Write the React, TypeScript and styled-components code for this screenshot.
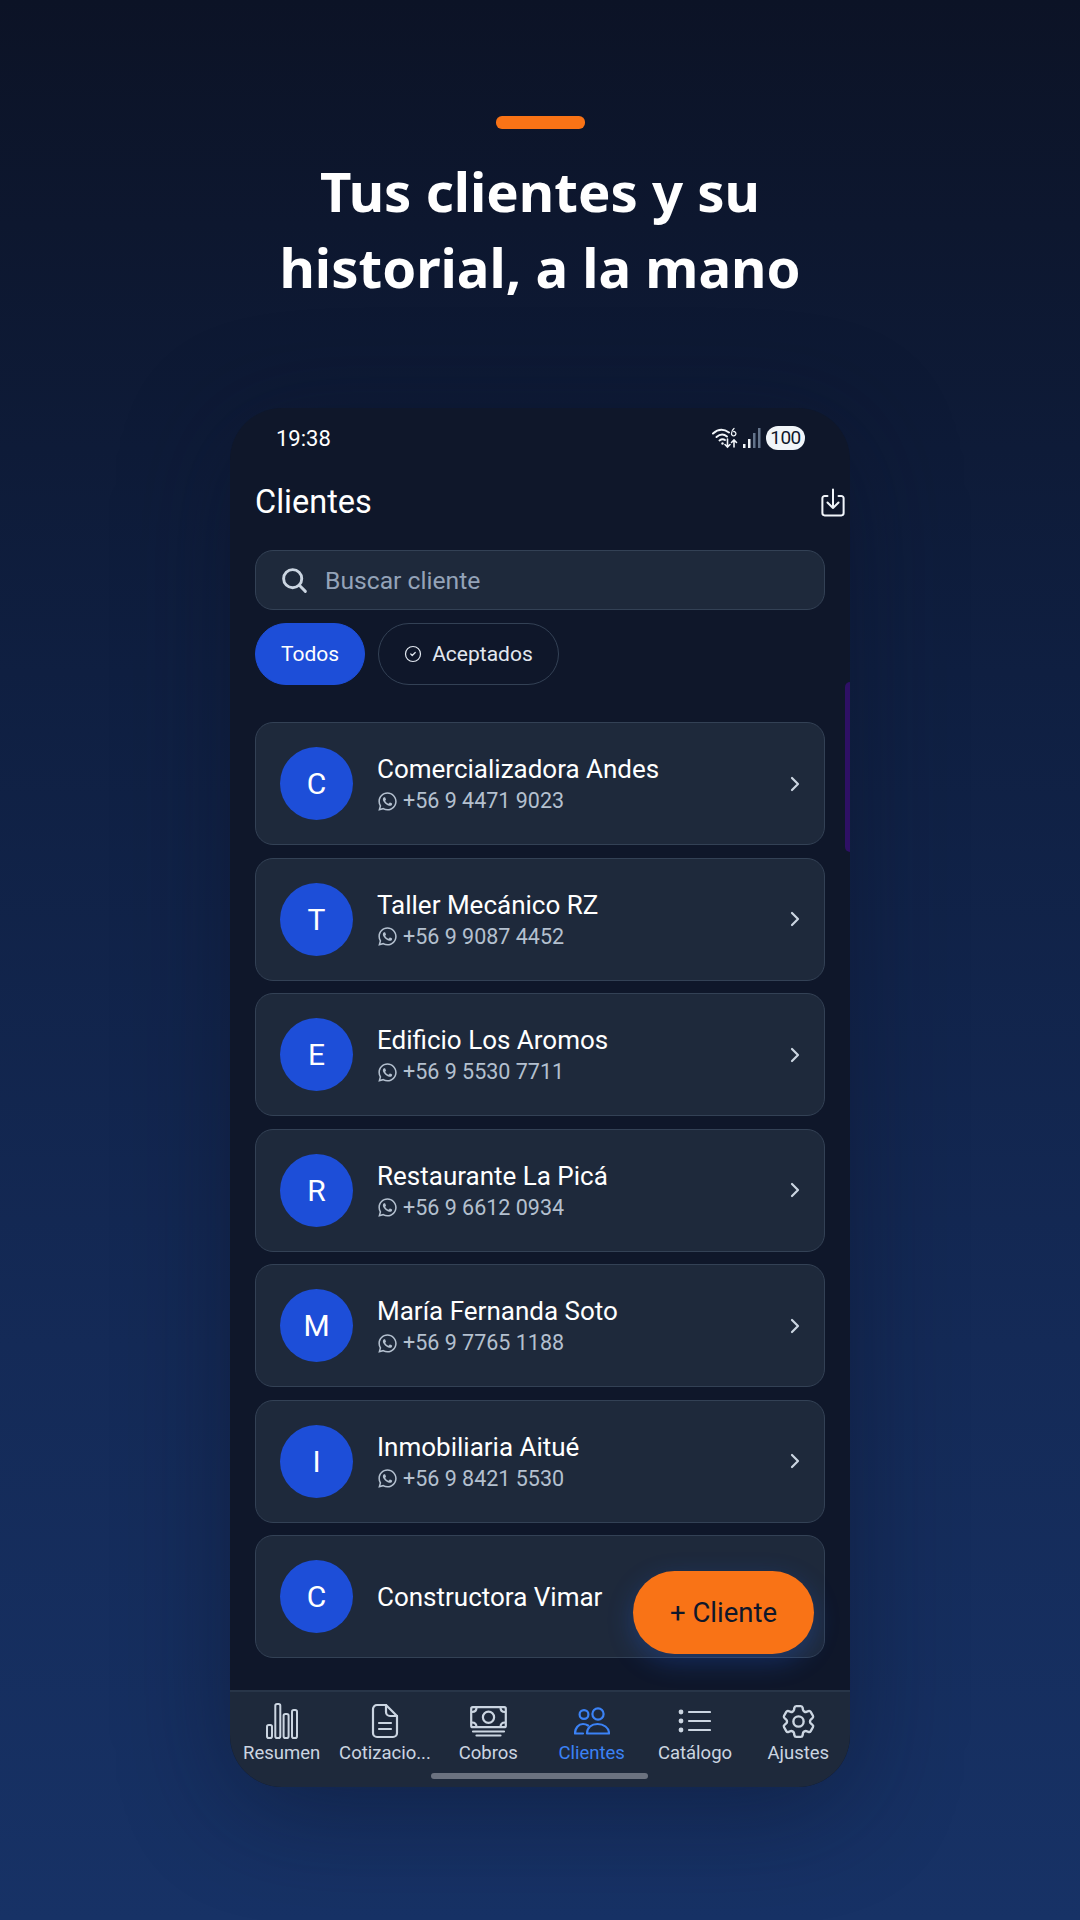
import React from "react";
import styled, { createGlobalStyle } from "styled-components";
import { FaWhatsapp } from "react-icons/fa";
import { HiOutlineCog6Tooth, HiOutlineMagnifyingGlass } from "react-icons/hi2";
import { LuChevronRight, LuCircleCheck } from "react-icons/lu";

const GlobalStyle = createGlobalStyle`
  html, body {
    margin: 0;
    padding: 0;
    background: #0b1224;
  }
  * {
    box-sizing: border-box;
  }
`;

const Page = styled.div`
  width: 1080px;
  height: 1920px;
  overflow: hidden;
  display: flex;
  flex-direction: column;
  align-items: center;
  padding-top: 116px;
  background: linear-gradient(180deg, #0c1326 0%, #0f1f41 35%, #142a57 70%, #173266 100%);
  font-family: "Noto Sans", "Open Sans", sans-serif;
  color: #fff;
`;

const Accent = styled.div`
  width: 89px;
  height: 13px;
  border-radius: 6px;
  background: #f97316;
`;

const Headline = styled.h1`
  margin: 24px 0 0;
  width: 700px;
  text-align: center;
  font-size: 54.5px;
  line-height: 76px;
  font-weight: 700;
`;

const Phone = styled.div`
  position: relative;
  margin-top: 103px;
  width: 620px;
  height: 1379px;
  display: flex;
  flex-direction: column;
  border-radius: 52px;
  overflow: hidden;
  background: #0f172a;
  box-shadow: 0 20px 110px rgba(11, 18, 38, 0.45);
  font-family: Roboto, "Noto Sans", sans-serif;
`;

const StatusBar = styled.div`
  height: 60px;
  padding: 0 45px 0 46px;
  display: flex;
  align-items: center;
  justify-content: space-between;
  font-size: 22px;
`;

const StatusIcons = styled.div`
  display: flex;
  align-items: center;
  gap: 5px;
`;

const Battery = styled.span`
  width: 39px;
  height: 24px;
  border-radius: 12px;
  background: #f1f5f9;
  color: #0f172a;
  font-size: 19px;
  line-height: 24px;
  text-align: center;
  letter-spacing: -0.5px;
`;

const TopBar = styled.div`
  margin-top: 9px;
  height: 50px;
  padding: 0 5px 0 25px;
  display: flex;
  align-items: center;
  justify-content: space-between;
`;

const Title = styled.div`
  font-size: 32.5px;
`;

const Search = styled.div`
  margin: 23px 25px 0;
  height: 60px;
  padding: 0 24px;
  display: flex;
  align-items: center;
  gap: 16px;
  border-radius: 18px;
  border: 1.5px solid #334155;
  background: #1e293b;
  color: #94a3b8;
  font-size: 24.7px;
  svg {
    color: #cbd5e1;
    flex: none;
  }
`;

const Chips = styled.div`
  margin: 13px 25px 0;
  display: flex;
  gap: 13px;
`;

const Chip = styled.div<{ $active?: boolean }>`
  height: 62px;
  padding: 0 25px;
  display: flex;
  align-items: center;
  gap: 10px;
  border-radius: 31px;
  font-size: 21px;
  color: ${(p) => (p.$active ? "#fff" : "#e2e8f0")};
  background: ${(p) => (p.$active ? "#1d4ed8" : "transparent")};
  border: 1.5px solid ${(p) => (p.$active ? "#1d4ed8" : "#334155")};
`;

const List = styled.div`
  flex: 1;
  min-height: 0;
  margin-top: 37px;
  padding: 0 25px;
  display: flex;
  flex-direction: column;
  gap: 12.5px;
  overflow: hidden;
`;

const Card = styled.div`
  height: 123px;
  flex: none;
  padding: 0 17px 0 24px;
  display: flex;
  align-items: center;
  border-radius: 18px;
  border: 1.5px solid #334155;
  background: #1e293b;
  color: #cbd5e1;
`;

const Avatar = styled.div`
  width: 73px;
  height: 73px;
  flex: none;
  border-radius: 50%;
  background: #1d4ed8;
  color: #fff;
  font-size: 30px;
  display: flex;
  align-items: center;
  justify-content: center;
`;

const Info = styled.div`
  flex: 1;
  margin-left: 24px;
  display: flex;
  flex-direction: column;
  gap: 1px;
`;

const Name = styled.div`
  color: #fff;
  font-size: 26px;
  line-height: 34px;
`;

const PhoneLine = styled.div`
  display: flex;
  align-items: center;
  gap: 5px;
  color: #b4c0cf;
  font-size: 21.5px;
  line-height: 28px;
`;

const Fab = styled.div`
  position: absolute;
  right: 36px;
  top: 1163px;
  width: 181px;
  height: 83px;
  border-radius: 42px;
  background: #f97316;
  color: #0f172a;
  font-size: 27.5px;
  display: flex;
  align-items: center;
  justify-content: center;
  box-shadow: 0 8px 26px rgba(37, 99, 235, 0.28);
`;

const EdgeHandle = styled.div`
  position: absolute;
  right: 0;
  top: 274px;
  width: 5px;
  height: 170px;
  border-radius: 5px 0 0 5px;
  background: #2e1065;
`;

const Nav = styled.div`
  position: relative;
  height: 97px;
  flex: none;
  display: grid;
  grid-template-columns: repeat(6, 1fr);
  padding-top: 10px;
  align-items: start;
  background: #1e293b;
  border-top: 2px solid #283548;
`;

const NavItem = styled.div<{ $active?: boolean }>`
  min-width: 0;
  display: flex;
  flex-direction: column;
  align-items: center;
  color: ${(p) => (p.$active ? "#3b82f6" : "#cbd5e1")};
`;

const NavIcon = styled.div`
  height: 38px;
  display: flex;
  align-items: center;
  justify-content: center;
`;

const NavLabel = styled.div`
  margin-top: 1px;
  font-size: 18.5px;
  line-height: 24px;
  white-space: nowrap;
`;

const HomeBar = styled.div`
  position: absolute;
  left: 201px;
  bottom: 8px;
  width: 217px;
  height: 6px;
  border-radius: 3px;
  background: #6b7280;
`;

const WifiIcon = () => (
  <svg width="26" height="22" viewBox="0 0 26 22" fill="none" stroke="#f1f5f9" strokeLinecap="round">
    <path d="M1 6.5C6 2 12 2 17 5.5" strokeWidth="2" />
    <path d="M4.5 10C8 7 12 7 15 9.5" strokeWidth="2" />
    <path d="M7.5 13.5C9.5 12 11.5 12 13 13" strokeWidth="2" />
    <circle cx="10.5" cy="16.5" r="1.2" fill="#f1f5f9" stroke="none" />
    <path d="M15.5 12v8m-2.5-2.5 2.5 2.5 2.5-2.5" strokeWidth="1.6" />
    <path d="M22 20v-7m-2.5 2.5L22 13l2.5 2.5" strokeWidth="1.6" />
    <path d="M22 1.5C20 3 19.5 5 19.5 6.5a2.2 2.2 0 1 0 2.2-2" strokeWidth="1.3" />
  </svg>
);

const SignalIcon = () => (
  <svg width="18" height="22" viewBox="0 0 18 22">
    <rect x="0" y="17" width="2.5" height="4" fill="#f1f5f9" />
    <rect x="5" y="12" width="2.5" height="9" fill="#f1f5f9" />
    <rect x="10" y="6" width="2.5" height="15" fill="#64748b" />
    <rect x="15" y="1" width="2.5" height="20" fill="#64748b" />
  </svg>
);

const DownloadIcon = () => (
  <svg width="24" height="31" viewBox="0 0 26 32" fill="none" stroke="#f1f5f9" strokeWidth="2.2" strokeLinecap="round" strokeLinejoin="round">
    <path d="M7 9H4a2.5 2.5 0 0 0-2.5 2.5v16A2.5 2.5 0 0 0 4 30h18a2.5 2.5 0 0 0 2.5-2.5v-16A2.5 2.5 0 0 0 22 9h-3" />
    <path d="M13 2v20m-6-6 6 6 6-6" />
  </svg>
);

const BarsIcon = () => (
  <svg width="32" height="36" viewBox="0 0 32 36" fill="none" stroke="currentColor" strokeWidth="2">
    <rect x="1" y="22" width="5" height="13" rx="1.8" />
    <rect x="9.3" y="1" width="5" height="34" rx="1.8" />
    <rect x="17.6" y="11" width="5" height="24" rx="1.8" />
    <rect x="26" y="7" width="5" height="28" rx="1.8" />
  </svg>
);

const DocIcon = () => (
  <svg width="28" height="36" viewBox="0 0 28 36" fill="none" stroke="currentColor" strokeWidth="2.2" strokeLinecap="round" strokeLinejoin="round">
    <path d="M6 2h9l11 11v17a4 4 0 0 1-4 4H6a4 4 0 0 1-4-4V6a4 4 0 0 1 4-4z" />
    <path d="M15 2v7a4 4 0 0 0 4 4h7" />
    <path d="M8 20h12M8 26h12" />
  </svg>
);

const CashIcon = () => (
  <svg width="37" height="31" viewBox="0 0 37 31" fill="none" stroke="currentColor" strokeWidth="2.2" strokeLinecap="round">
    <rect x="1.2" y="1.2" width="34.6" height="20" rx="1.5" />
    <circle cx="18.5" cy="11.2" r="5.6" />
    <path d="M2 6c3 0 4.5-1.5 4.5-4.5M35 6c-3 0-4.5-1.5-4.5-4.5M2 16.5c3 0 4.5 1.5 4.5 4.5M35 16.5c-3 0-4.5 1.5-4.5 4.5" />
    <path d="M3 25.5h31M6.5 29.5h24" />
  </svg>
);

const PeopleIcon = () => (
  <svg width="36" height="28" viewBox="0 0 36 28" fill="none" stroke="currentColor" strokeWidth="2.2" strokeLinecap="round" strokeLinejoin="round">
    <circle cx="10" cy="7.5" r="4.4" />
    <circle cx="24" cy="7" r="5.6" />
    <path d="M13 26.5c0-6 4.5-9.5 10.5-9.5S35 20.5 35 26.5H13z" />
    <path d="M14 18.5c-1.5-1-3-1.5-5-1.500-4.5 0-8 4-8 9.500h8" />
  </svg>
);

const ListIcon = () => (
  <svg width="33" height="24" viewBox="0 0 33 24" fill="none" stroke="currentColor" strokeWidth="2.2" strokeLinecap="round">
    <circle cx="3" cy="3" r="2.4" fill="currentColor" stroke="none" />
    <circle cx="3" cy="12" r="2.4" fill="currentColor" stroke="none" />
    <circle cx="3" cy="21" r="2.4" fill="currentColor" stroke="none" />
    <path d="M11 3h21M11 12h21M11 21h21" />
  </svg>
);

const clients = [
  { name: "Comercializadora Andes", phone: "+56 9 4471 9023" },
  { name: "Taller Mecánico RZ", phone: "+56 9 9087 4452" },
  { name: "Edificio Los Aromos", phone: "+56 9 5530 7711" },
  { name: "Restaurante La Picá", phone: "+56 9 6612 0934" },
  { name: "María Fernanda Soto", phone: "+56 9 7765 1188" },
  { name: "Inmobiliaria Aitué", phone: "+56 9 8421 5530" },
  { name: "Constructora Vimar" },
];

const navItems = [
  { label: "Resumen", icon: <BarsIcon /> },
  { label: "Cotizacio...", icon: <DocIcon /> },
  { label: "Cobros", icon: <CashIcon /> },
  { label: "Clientes", icon: <PeopleIcon />, active: true },
  { label: "Catálogo", icon: <ListIcon /> },
  { label: "Ajustes", icon: <HiOutlineCog6Tooth size={41} strokeWidth={1.4} /> },
];

export default function App() {
  return (
    <Page>
      <GlobalStyle />
      <Accent />
      <Headline>
        Tus clientes y su
        <br />
        historial, a la mano
      </Headline>
      <Phone>
        <StatusBar>
          <span>19:38</span>
          <StatusIcons>
            <WifiIcon />
            <SignalIcon />
            <Battery>100</Battery>
          </StatusIcons>
        </StatusBar>
        <TopBar>
          <Title>Clientes</Title>
          <DownloadIcon />
        </TopBar>
        <Search>
          <HiOutlineMagnifyingGlass size={29} strokeWidth={2.4} />
          <span>Buscar cliente</span>
        </Search>
        <Chips>
          <Chip $active>Todos</Chip>
          <Chip>
            <LuCircleCheck size={18} strokeWidth={1.6} />
            Aceptados
          </Chip>
        </Chips>
        <List>
          {clients.map((client) => (
            <Card key={client.name}>
              <Avatar>{client.name[0]}</Avatar>
              <Info>
                <Name>{client.name}</Name>
                {client.phone && (
                  <PhoneLine>
                    <FaWhatsapp size={21} />
                    {client.phone}
                  </PhoneLine>
                )}
              </Info>
              <LuChevronRight size={24} strokeWidth={2.2} />
            </Card>
          ))}
        </List>
        <Nav>
          {navItems.map((item) => (
            <NavItem key={item.label} $active={item.active}>
              <NavIcon>{item.icon}</NavIcon>
              <NavLabel>{item.label}</NavLabel>
            </NavItem>
          ))}
          <HomeBar />
        </Nav>
        <Fab>+ Cliente</Fab>
        <EdgeHandle />
      </Phone>
    </Page>
  );
}
